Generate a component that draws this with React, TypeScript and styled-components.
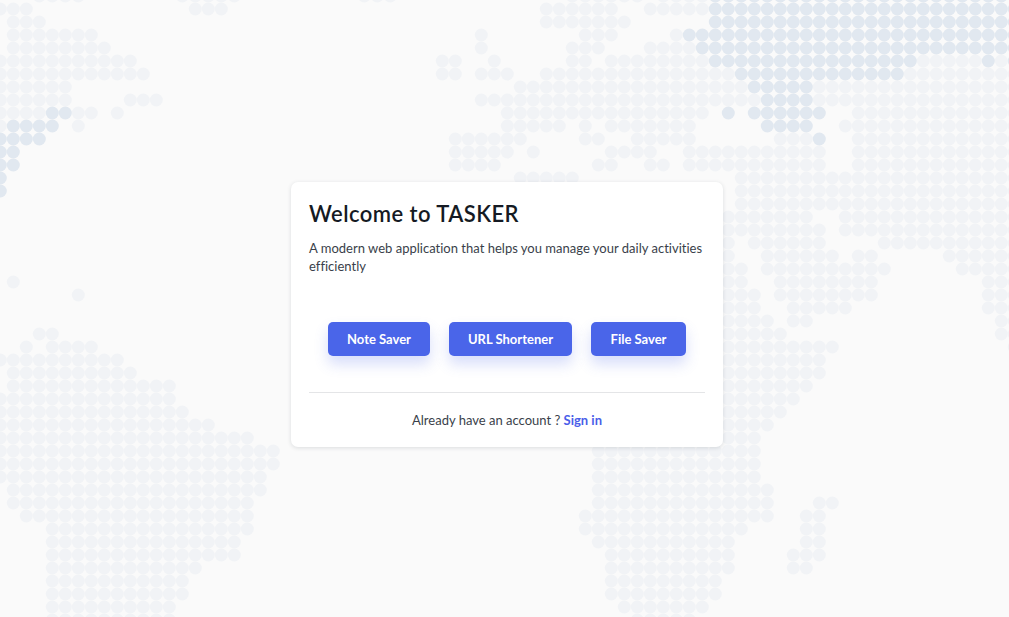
import React from 'react';
import styled, { createGlobalStyle } from 'styled-components';

// dotted world map: row index -> column ranges, on a 13px grid
const LIGHT: Record<number, string> = {
  [-1]: '3-6 14-18 28-30 44-49 51-54',
  0: '0-2 15-17 42-47 50-54',
  1: '1-3 42-48',
  2: '1-7 37 45-47 52',
  3: '1-8 37 44-46 50-53',
  4: '0-10 34-35 38 44-45 47-54 71-75 77',
  5: '0-11 34-35 37-39 42-56 70-78',
  6: '0-5 40-57 63-78',
  7: '0-5 10-12 37-58 63-78',
  8: '0-3 6-7 9 39-54 66-78',
  9: '0 6 39-43 45 47-53 65-78',
  10: '35-40 45-46 49-53 60-62 66-78',
  11: '35-39 41 47-50 53-63 66-78',
  12: '35-38 46-47 50-51 53-63 66-78',
  13: '40-44 57-78',
  14: '57-78',
  15: '57-78',
  16: '56-62 65-78',
  17: '56-63 65-78',
  18: '56 58-63 68-78',
  19: '56 59-64 66-67 73-78',
  20: '56-57 59-68 74-78',
  21: '1 56-57 60-67 76-78',
  22: '6 56-58 60-67 76-78',
  23: '56-58 61-65 76-78',
  24: '56-59 61-62 77-78',
  25: '3-4 56-60 77-78',
  26: '2 4-7 56-64 78',
  27: '0-9 56-63',
  28: '1-10 56-63',
  29: '1-13 56-62',
  30: '0-13 56-61',
  31: '0-14 56-60',
  32: '0-16 56-59',
  33: '0-19 56-58',
  34: '0-21 46-58',
  35: '0-21 46-58',
  36: '0-20 46-58',
  37: '1-20 46-59',
  38: '1-19 46-59 63-64',
  39: '2-19 45-59 62-63',
  40: '4-19 45-57 62-63',
  41: '4-18 46-56 62-63',
  42: '4-18 47-56 61-63',
  43: '4-15 47-56 61-62',
  44: '4-14 47-55',
  45: '4-14 47-55',
  46: '4-13 48-54',
  47: '4-13 49-53',
};

const BLUE: Record<number, string> = {
  [-1]: '55-78',
  0: '55-78',
  1: '55-78',
  2: '53-78',
  3: '54-78',
  4: '55-70 76 78',
  5: '57-69',
  6: '58-62',
  7: '59-62',
  8: '4-5 56 58-63',
  9: '1-4 59-62',
  10: '0-3 63',
  11: '0-1',
  12: '0-1',
  13: '0',
  14: '0',
};

function expand(rows: Record<number, string>) {
  const dots: { cx: number; cy: number }[] = [];
  Object.entries(rows).forEach(([row, ranges]) => {
    ranges.split(' ').forEach((range) => {
      const [from, to = from] = range.split('-').map(Number);
      for (let col = from; col <= to; col++) {
        dots.push({ cx: col * 13 + 0.3, cy: Number(row) * 13 + 9 });
      }
    });
  });
  return dots;
}

function WorldMap() {
  return (
    <MapLayer viewBox="0 0 1009 617" aria-hidden="true">
      <g fill="#f1f3f6">
        {expand(LIGHT).map((d) => (
          <circle key={`${d.cx}-${d.cy}`} cx={d.cx} cy={d.cy} r="6.5" />
        ))}
      </g>
      <g fill="#e1e8f0">
        {expand(BLUE).map((d) => (
          <circle key={`${d.cx}-${d.cy}`} cx={d.cx} cy={d.cy} r="6.5" />
        ))}
      </g>
    </MapLayer>
  );
}

export default function App() {
  return (
    <>
      <GlobalStyle />
      <Page>
        <WorldMap />
        <Card>
          <Title>Welcome to TASKER</Title>
          <Intro>A modern web application that helps you manage your daily activities efficiently</Intro>
          <Actions>
            <ActionButton $width={102}>Note Saver</ActionButton>
            <ActionButton $width={123}>URL Shortener</ActionButton>
            <ActionButton $width={95}>File Saver</ActionButton>
          </Actions>
          <Divider />
          <Footer>
            Already have an account ? <SignIn href="#">Sign in</SignIn>
          </Footer>
        </Card>
      </Page>
    </>
  );
}

const GlobalStyle = createGlobalStyle`
  html, body {
    margin: 0;
    height: 100%;
    background: #fafafa;
  }
  * {
    box-sizing: border-box;
  }
`;

const Page = styled.div`
  position: relative;
  width: 100%;
  height: 100vh;
  overflow: hidden;
  display: flex;
  align-items: center;
  justify-content: center;
  padding: 12px 0 0 5px;
  font-family: 'Lato', 'Open Sans', sans-serif;
`;

const MapLayer = styled.svg`
  position: absolute;
  left: 0;
  top: 0;
  width: 1009px;
  height: 617px;
`;

const Card = styled.div`
  position: relative;
  width: 432px;
  height: 265px;
  padding: 18px;
  background: #fff;
  border-radius: 7px;
  box-shadow: 0 1px 4px rgba(30, 40, 60, 0.14);
`;

const Title = styled.h1`
  margin: 0;
  font-size: 22px;
  line-height: 28px;
  font-weight: 600;
  letter-spacing: 0.44px;
  color: #151a23;
`;

const Intro = styled.p`
  margin: 11px 0 0;
  font-size: 13px;
  line-height: 18px;
  letter-spacing: 0.01px;
  color: #3a3f4a;
`;

const Actions = styled.div`
  display: flex;
  justify-content: center;
  gap: 19px;
  margin-top: 47px;
`;

const ActionButton = styled.button<{ $width: number }>`
  width: ${({ $width }) => $width}px;
  height: 34px;
  padding: 0;
  border: none;
  border-radius: 5px;
  background: #4a65e9;
  color: #fff;
  font-family: inherit;
  font-size: 13px;
  font-weight: 700;
  box-shadow: 0 8px 14px rgba(74, 101, 233, 0.22);
`;

const Divider = styled.hr`
  margin: 36px 0 0;
  border: none;
  border-top: 1px solid #e4e5e7;
`;

const Footer = styled.div`
  margin-top: 18px;
  text-align: center;
  font-size: 13px;
  line-height: 18px;
  color: #3a3f4a;
`;

const SignIn = styled.a`
  color: #4a5ee9;
  font-weight: 700;
  text-decoration: none;
`;
